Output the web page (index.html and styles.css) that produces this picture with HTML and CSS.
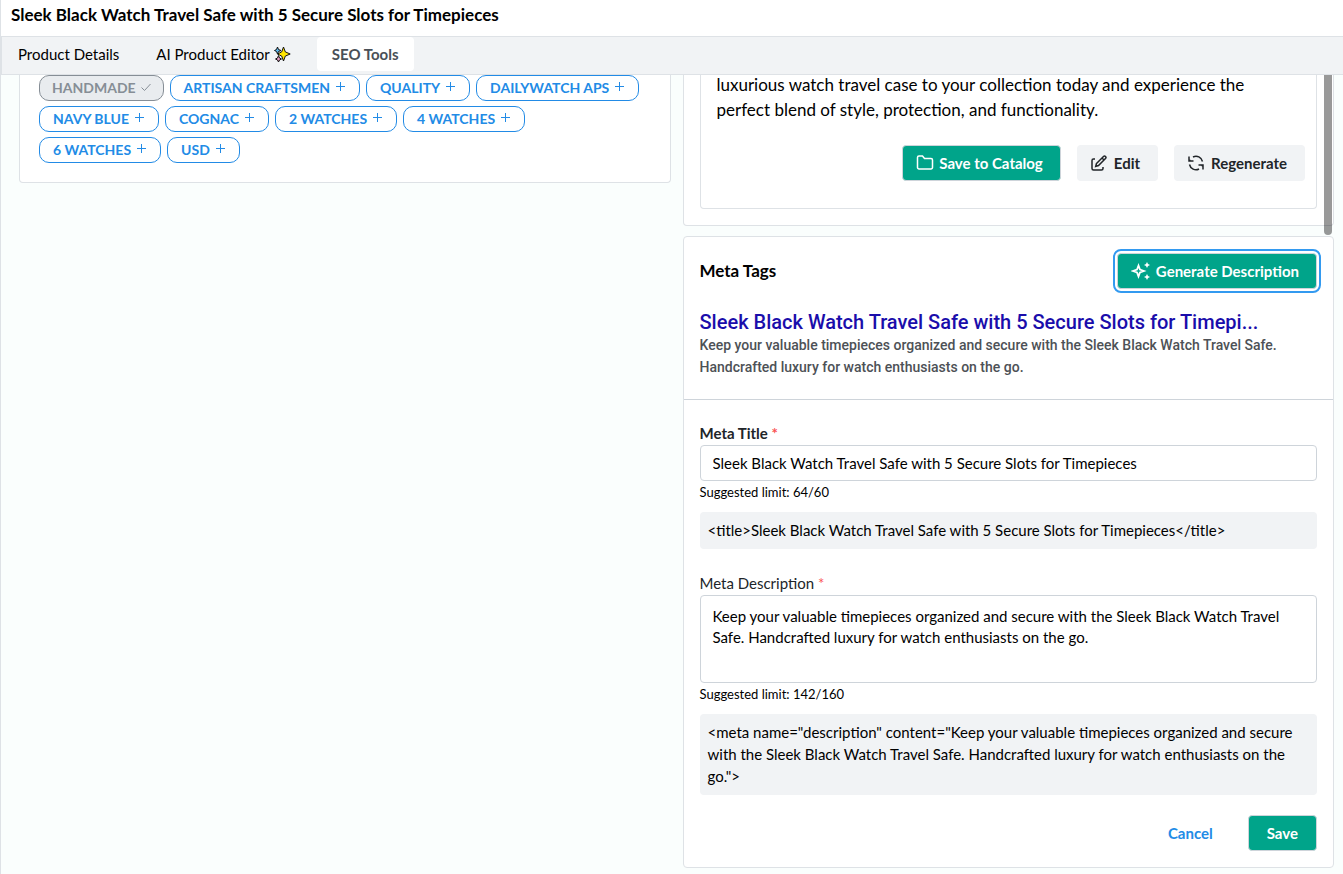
FILE: index.html
```html
<!DOCTYPE html>
<html lang="en">
<head>
<meta charset="utf-8">
<title>SEO Tools</title>
<link rel="stylesheet" href="styles.css">
</head>
<body>
<div class="app">
  <header class="titlebar"><h1>Sleek Black Watch Travel Safe with 5 Secure Slots for Timepieces</h1></header>
  <nav class="tabs">
    <button class="tab" type="button">Product Details</button>
    <button class="tab tab-ai" type="button">AI Product Editor
      <svg class="sparkle" width="17" height="17" viewBox="0 0 17 17" aria-hidden="true">
        <path d="M3.500 1l1 2.500L7 4.500 4.500 5.500 3.500 8 2.500 5.500.5 4.500 2.500 3.500z" fill="#59b8ee" stroke="#111"/>
        <path d="M4.500 9.500l1 2.500 2 1-2 1-1 2-1-2-2-1 2-1z" fill="#e99bc3" stroke="#111"/>
        <path d="M9.500 1l1.800 4.900 4.900 2.100-4.900 2.100-1.800 4.900-1.800-4.900L3.500 8l4.200-2.100z" fill="#ffe600" stroke="#111"/>
      </svg>
    </button>
    <button class="tab active" type="button">SEO Tools</button>
  </nav>
  <main class="content">
    <section class="card keywords">
      <div class="chips">
        <button class="chip used" type="button">HANDMADE <svg width="10" height="12" viewBox="0 0 10 12"><path d="M.5 5.500l3 3L9.500 2"/></svg></button>
        <button class="chip" type="button">ARTISAN CRAFTSMEN <svg width="10" height="12" viewBox="0 0 10 12"><path d="M5.500 0v9M1 4.500h9"/></svg></button>
        <button class="chip" type="button">QUALITY <svg width="10" height="12" viewBox="0 0 10 12"><path d="M5.500 0v9M1 4.500h9"/></svg></button>
        <button class="chip" type="button">DAILYWATCH APS <svg width="10" height="12" viewBox="0 0 10 12"><path d="M5.500 0v9M1 4.500h9"/></svg></button>
        <button class="chip" type="button">NAVY BLUE <svg width="10" height="12" viewBox="0 0 10 12"><path d="M5.500 0v9M1 4.500h9"/></svg></button>
        <button class="chip" type="button">COGNAC <svg width="10" height="12" viewBox="0 0 10 12"><path d="M5.500 0v9M1 4.500h9"/></svg></button>
        <button class="chip" type="button">2 WATCHES <svg width="10" height="12" viewBox="0 0 10 12"><path d="M5.500 0v9M1 4.500h9"/></svg></button>
        <button class="chip" type="button">4 WATCHES <svg width="10" height="12" viewBox="0 0 10 12"><path d="M5.500 0v9M1 4.500h9"/></svg></button>
        <button class="chip" type="button">6 WATCHES <svg width="10" height="12" viewBox="0 0 10 12"><path d="M5.500 0v9M1 4.500h9"/></svg></button>
        <button class="chip" type="button">USD <svg width="10" height="12" viewBox="0 0 10 12"><path d="M5.500 0v9M1 4.500h9"/></svg></button>
      </div>
    </section>
    <div class="column">
      <section class="card copy">
        <div class="copy-box">
          <p class="copy-text">luxurious watch travel case to your collection today and experience the<br>perfect blend of style, protection, and functionality.</p>
          <div class="copy-actions">
            <button class="btn primary" type="button"><svg width="18" height="16" viewBox="0 0 18 16"><path d="M1.500 12.500v-10a1.500 1.500 0 0 1 1.500-1.500h3.500l2 2.500h6.500a1.500 1.500 0 0 1 1.500 1.500v7.500a1.500 1.500 0 0 1-1.500 1.500H3a1.500 1.500 0 0 1-1.500-1.500z"/></svg>Save to Catalog</button>
            <button class="btn subtle" type="button"><svg width="16" height="16" viewBox="0 0 16 16"><path d="M4 4H2.500A1.500 1.500 0 0 0 1 5.500v8A1.500 1.500 0 0 0 2.500 15h8a1.500 1.500 0 0 0 1.500-1.500V12M5.500 8.500l7-7a1.400 1.400 0 0 1 2 2l-7 7-2.800.8z"/><path d="M11 3l2 2"/></svg>Edit</button>
            <button class="btn subtle" type="button"><svg width="16" height="16" viewBox="0 0 16 16"><path d="M1 1.500V6h4.500M5 2A6.600 6.600 0 0 1 14.500 6.500M1 6l1.500-1M15 14.500V10h-4.500M11 14A6.600 6.600 0 0 1 1.500 9.500M15 10l-1.500 1"/></svg>Regenerate</button>
          </div>
        </div>
      </section>
      <section class="card meta">
        <div class="meta-preview">
          <div class="meta-head">
            <h2>Meta Tags</h2>
            <button class="btn primary focused" type="button"><svg width="20" height="18" viewBox="0 0 20 18"><path d="M7.500 3.500L9 7.500 13 9 9 10.500 7.500 14.500 6 10.500 2 9 6 7.500z" stroke-width="1.800"/><path d="M16 0l1 2 2 1-2 1-1 2-1-2-2-1 2-1zM16 12l1 2 2 1-2 1-1 2-1-2-2-1 2-1z" class="solid"/></svg>Generate Description</button>
          </div>
          <a class="result-title" href="#">Sleek Black Watch Travel Safe with 5 Secure Slots for Timepi...</a>
          <p class="result-text">Keep your valuable timepieces organized and secure with the Sleek Black Watch Travel Safe.<br>Handcrafted luxury for watch enthusiasts on the go.</p>
        </div>
        <form class="meta-form">
          <label class="label strong" for="meta-title">Meta Title <span class="required">*</span></label>
          <input class="field" id="meta-title" type="text" value="Sleek Black Watch Travel Safe with 5 Secure Slots for Timepieces">
          <p class="hint">Suggested limit: 64/60</p>
          <div class="code">&lt;title&gt;Sleek Black Watch Travel Safe with 5 Secure Slots for Timepieces&lt;/title&gt;</div>
          <label class="label second" for="meta-desc">Meta Description <span class="required">*</span></label>
          <textarea class="field area" id="meta-desc">Keep your valuable timepieces organized and secure with the Sleek Black Watch Travel Safe. Handcrafted luxury for watch enthusiasts on the go.</textarea>
          <p class="hint">Suggested limit: 142/160</p>
          <div class="code">&lt;meta name="description" content="Keep your valuable timepieces organized and secure with the Sleek Black Watch Travel Safe. Handcrafted luxury for watch enthusiasts on the go."&gt;</div>
          <div class="form-actions">
            <button class="btn link" type="button">Cancel</button>
            <button class="btn primary save" type="button">Save</button>
          </div>
        </form>
      </section>
    </div>
    <div class="scroll-thumb"></div>
  </main>
</div>
</body>
</html>
```
FILE: styles.css
```css
* { box-sizing: border-box; }
body {
  margin: 0;
  background: #fafefd;
  color: #000;
  font: 15px/22px Lato, "Liberation Sans", sans-serif;
}
h1, h2, p { margin: 0; }
button, input, textarea { font: inherit; }
button { cursor: pointer; }
svg { fill: none; stroke: currentColor; flex: none; }
.app { min-height: 100vh; border-left: 1px solid #dee2e6; }
.titlebar {
  height: 36px;
  padding: 4px 10px;
  background: #fff;
}
h1, h2 { font-size: 17px; line-height: 22px; font-weight: 700; }
.tabs {
  display: flex;
  height: 39px;
  background: #f1f3f5;
  border: 1px solid #dee2e6;
  border-width: 1px 0 1px 1px;
}
.tab {
  display: flex;
  align-items: center;
  gap: 4px;
  height: 34px;
  padding: 0 16px;
  border: 0;
  border-radius: 4px;
  background: none;
  color: #000;
  white-space: nowrap;
}
.tab-ai { margin: 0 10px 0 5px; }
.tab.active { padding: 0 15px; background: #fff; color: #495057; font-weight: 700; }
.content {
  position: relative;
  display: grid;
  grid-template-columns: 1fr 1fr;
  gap: 12px;
  align-items: start;
  padding: 0 9px 6px 18px;
  overflow: hidden;
}
.card { background: #fff; border: 1px solid #dee2e6; border-radius: 4px; }
.keywords, .copy { border-top: 0; border-radius: 0 0 4px 4px; }
.keywords { padding: 0 30px 19px 19px; }
.chips { display: flex; flex-wrap: wrap; gap: 5px 6px; }
.chip {
  display: flex;
  align-items: center;
  gap: 5px;
  height: 26px;
  padding: 0 14px 0 13px;
  border: 1px solid #228be6;
  border-radius: 10px;
  background: #fff;
  color: #228be6;
  font-size: 14px;
  font-weight: 700;
}
.chip.used { padding: 0 12px; background: #e9ecef; border-color: #868e96; color: #868e96; }
.column { display: flex; flex-direction: column; gap: 10px; min-width: 0; }
.copy { padding: 0 16px 16px; }
.copy-box {
  padding: 0 11px 27px 16px;
  border: 1px solid #dee2e6;
  border-top: 0;
  border-radius: 0 0 4px 4px;
}
.copy-text { margin-top: -3px; font-size: 17px; line-height: 25px; }
.copy-actions { display: flex; justify-content: flex-end; gap: 16px; margin-top: 23px; }
.btn {
  display: flex;
  align-items: center;
  justify-content: center;
  gap: 5px;
  height: 36px;
  padding: 0 17px 0 13px;
  border: 1px solid transparent;
  border-radius: 4px;
  font-weight: 700;
  white-space: nowrap;
}
.btn svg { stroke-width: 1.500; }
.btn .solid { fill: currentColor; stroke: none; }
.primary { background: #00a48a; border-color: #ced4da; color: #fff; }
.subtle { gap: 7px; background: #f1f3f5; color: #212529; }
.focused { outline: 2px solid #339af0; outline-offset: 2px; }
.link { padding: 0 14px; background: none; color: #228be6; }
.meta-preview { padding: 16px 16px 21px; border-bottom: 1px solid #ced4da; }
.meta-head { display: flex; align-items: center; justify-content: space-between; }
.result-title {
  display: block;
  margin-top: 21px;
  color: #1a0dab;
  font: 500 20px/24px Roboto, sans-serif;
  text-decoration: none;
}
.result-text { color: #4d5156; font: 500 14px/22px Roboto, sans-serif; }
.meta-form { display: flex; flex-direction: column; padding: 22px 16px 16px; }
.label { color: #212529; line-height: 23px; }
.strong { font-weight: 700; }
.second { margin-top: 23px; }
.required { color: #fa5252; }
.field {
  width: 100%;
  height: 36px;
  padding: 0 12px;
  border: 1px solid #ced4da;
  border-radius: 4px;
  background: #fff;
  color: #000;
}
.area { height: 88px; padding: 10px 12px; line-height: 21px; resize: none; }
.hint { font-size: 13px; line-height: 23px; }
.code {
  margin-top: 8px;
  padding: 7px 8px 8px;
  border-radius: 4px;
  background: #f1f3f5;
}
.form-actions { display: flex; justify-content: flex-end; gap: 20px; margin-top: 20px; }
.save { padding: 0 18px; }
.scroll-thumb {
  position: absolute;
  top: 0;
  right: 11px;
  width: 8px;
  height: 160px;
  border-radius: 0 0 4px 4px;
  background: rgba(0, 0, 0, .4);
}
```
